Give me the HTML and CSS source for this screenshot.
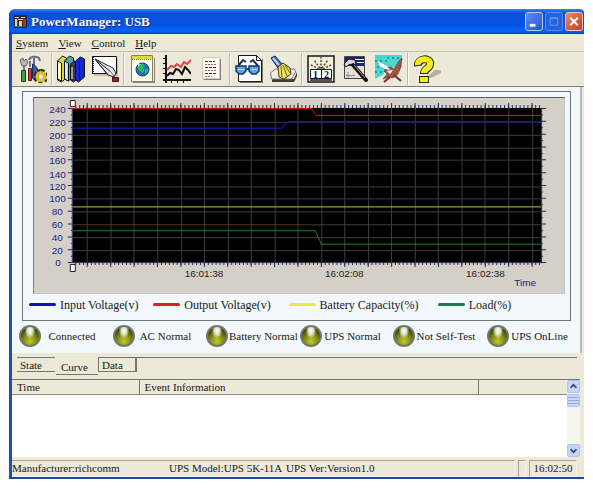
FILE: index.html
```html
<!DOCTYPE html>
<html lang="en">
<head>
<meta charset="utf-8">
<title>PowerManager: USB</title>
<link rel="stylesheet" href="styles.css">
</head>
<body>
<main class="window">
  <header class="titlebar">
    <svg class="app-icon" viewBox="0 0 13 13" aria-hidden="true">
      <path fill="#302828" d="M0 0h13v13H0z"/><path fill="#d8d0c0" d="M1 2h4v1H1zM7 2h4v1H7zM1 4h2v7H1zM4 4h5v1H4zM5 6h3v5H5z"/><path fill="#a83030" d="M9 4h3v8H9zM3 5h1v5H3z"/><path fill="#408060" d="M0 11h8v1H0z"/>
    </svg>
    <h1 class="title">PowerManager: USB</h1>
    <button class="winbtn" aria-label="Minimize"><svg viewBox="0 0 17 17"><path fill="#fff" d="M4 11h6v3H4z"/></svg></button>
    <button class="winbtn winbtn-max" aria-label="Maximize"><svg viewBox="0 0 17 17"><path fill="none" stroke="#6a9cf4" d="M4.500 4.500h8v8h-8zM4 5.500h9"/></svg></button>
    <button class="winbtn winbtn-close" aria-label="Close"><svg viewBox="0 0 17 17"><path fill="none" stroke="#fff" stroke-width="2" d="M4.500 4.500l8 8M12.500 4.500l-8 8"/></svg></button>
  </header>

  <nav class="menu">
    <button><u>S</u>ystem</button>
    <button><u>V</u>iew</button>
    <button><u>C</u>ontrol</button>
    <button><u>H</u>elp</button>
  </nav>

  <div class="toolbar" role="toolbar">
    <button aria-label="Settings"><svg viewBox="0 0 28 28">
      <path fill="#b8b8b0" stroke="#505050" stroke-width=".8" d="M1 5l3-2 1 3 2-2 2 3-2 4H3z"/>
      <path stroke="#777" stroke-width="2" d="M5 10v6M11 6v6"/>
      <path fill="#38a048" stroke="#184020" d="M2.500 15.500h4v11h-4z"/>
      <path fill="#d03838" stroke="#601818" d="M9.500 13.500h3v12h-3z"/>
      <path fill="none" stroke="#607080" stroke-width="2" d="M10 5c1-4 7-4 10-2l1 3M15 3v9"/>
      <path fill="#3858c0" stroke="#182858" d="M13.500 9l4 3 2 6-3 8-3-3z"/>
      <path fill="none" stroke="#303000" stroke-width="5" stroke-dasharray="3 1.700" d="M22 16.500a5 5 0 1 1-.1 0"/>
      <circle cx="22" cy="21.500" r="4" fill="none" stroke="#e0c020" stroke-width="3"/>
    </svg></button>
    <i class="sep"></i>
    <button aria-label="Log"><svg viewBox="0 0 28 28">
      <g stroke="#101010" stroke-linejoin="round"><path fill="#d8d840" d="M.500 6l5-5 4 2v20l-5 4-4-2z"/><path fill="#fff8b0" d="M.500 6l4 2v18l-4-2z"/><path fill="#50a8a8" d="M7.500 6l5-5 4 2v18l-5 5-4-2z"/><path fill="#b0e0d8" d="M7.500 6l4 2v18l-4-2z"/><path fill="#383850" d="M13.500 9l4-3 3 2v16l-4 3-3-2z"/><path fill="#1828d0" d="M18.500 6l5-4 4 2v18l-6 5-3-2z"/></g>
      <path fill="none" stroke="#fff" d="M2 9v13M9 9v13M15 12v12"/><path stroke="#0010a0" d="M22.500 7v18M23 2l-4 4"/>
    </svg></button>
    <button aria-label="Event note"><svg viewBox="0 0 28 28">
      <path fill="#c8c0b0" d="M3 3h24v18H3z"/><path fill="#fff" stroke="#111" d="M1.500 1.500h24v17h-24z"/><path stroke="#111" stroke-width="2" stroke-dasharray="1 1" d="M2 2v17"/>
      <path fill="#e8e8e8" stroke="#222" stroke-linejoin="round" d="M4 4l18 9 3 5-2 4-6-2zM4 4l13 16M4 4l16 13"/><path stroke="#777" d="M19 16l4 5"/><path fill="#982020" stroke="#401010" d="M21.500 22.500h6v4h-6z"/>
    </svg></button>
    <i class="sep"></i>
    <button aria-label="Web"><svg viewBox="0 0 28 28">
      <path fill="#908878" d="M4 26h21V3h1v25H4z"/><path fill="#fffdf0" stroke="#888060" d="M2.500.500h21v26h-21z"/><path fill="#d8dc38" d="M3 1h20v3H3z"/><path stroke="#807820" stroke-dasharray="1 1" d="M3 4.500h20"/>
      <circle cx="13.500" cy="14.500" r="6.500" fill="#2070c8" stroke="#104060"/><path fill="#38b850" d="M8 12l4-3 4 1-2 3 2 2-3 3-3-3zM16 15l3-2v4l-3 3z"/><path fill="#90e0e8" d="M9 9h3l-3 3z"/>
    </svg></button>
    <button aria-label="Curve"><svg viewBox="0 0 28 28">
      <path fill="none" stroke="#101010" stroke-width="2" d="M3 0v28M0 25h28"/><path stroke="#101010" d="M0 3.500h3M0 8.500h3M0 13.500h3M0 18.500h3M8.500 25v3M14.500 25v3M20.500 25v3"/>
      <path fill="none" stroke="#d84848" stroke-width="2" d="M4 15l4-4 3 1 3-3 4 3 3-5 3 2 4-4"/><path fill="none" stroke="#181010" stroke-width="2" d="M4 21l3-3 3 1 3-5 3 1 3 4 3-7 3 3 3 4"/>
    </svg></button>
    <button aria-label="Report"><svg viewBox="0 0 28 28">
      <path fill="#888070" d="M7 24h16V4h1v21H7z"/><path fill="#fffdf5" stroke="#d0c8b8" d="M5.500 2.500h17v21h-17z"/><path fill="none" stroke="#383030" stroke-dasharray="3 1" d="M8 6.500h10M8 12.500h12M8 18.500h11"/><path fill="none" stroke="#c06050" stroke-dasharray="2 1" d="M8 9.500h12M8 15.500h12M8 21.500h7"/>
    </svg></button>
    <i class="sep"></i>
    <button aria-label="View"><svg viewBox="0 0 28 28">
      <path fill="#807870" d="M5 27h22V4h1v24H5z"/><path fill="#fff" stroke="#181818" d="M3.500.500h18l5 5v21h-23z"/><path fill="none" stroke="#181818" d="M21.500.500v5h5"/>
      <path fill="none" stroke="#203048" stroke-width="2" d="M3 11l5-6 3 2M23 11l-5-6-3 2M12 14h3"/><path fill="#58a8e8" stroke="#103868" stroke-width="1.500" d="M1 11h10v5l-3 3H4l-3-3zM14 11h10v5l-3 3h-4l-3-3z"/><path stroke="#b8e0ff" d="M3 14.500h6M16 14.500h6"/>
    </svg></button>
    <button aria-label="Clean"><svg viewBox="0 0 28 28">
      <path fill="#403c38" d="M3 24h22l3-7v4l-3 6H3z"/><path fill="#f0eee0" stroke="#777" d="M1.500 18l5-4h19l1 3-4 7h-20z"/><path fill="#3870b8" stroke="#102848" d="M2 3l4-2 7 8-4 4z"/><path stroke="#b0d8f8" stroke-width="2" d="M4 3l6 7"/>
      <path fill="#f0e060" stroke="#403810" stroke-linejoin="round" d="M9 12l5-4 7 5 1 6-7 5-5-2z"/><path fill="none" stroke="#706018" d="M12 11l1 11M14 10l4 11M16 10l5 8"/>
    </svg></button>
    <i class="sep"></i>
    <button aria-label="Schedule"><svg viewBox="0 0 28 28">
      <path fill="#f2efdf" stroke="#181818" stroke-width="1.500" d="M1 1h26v26H1z"/><path fill="none" stroke="#604018" stroke-width="1.500" stroke-dasharray="2 1.500" d="M14 14V2M13 13L7 5M15 13l6-8M12 14L4 10M16 14l8-4"/>
      <path fill="#fff" stroke="#102030" d="M3.500 14.500h21v9h-21z"/><path stroke="#102030" d="M14.500 15v9"/><path fill="#555" d="M3 24h22v2H3z"/>
      <text class="digits" x="6" y="23">1</text><text class="digits" x="17" y="23">2</text>
    </svg></button>
    <button aria-label="Tools"><svg viewBox="0 0 28 28">
      <path fill="#e4e0d4" stroke="#444" d="M3.500 1.500h20v22h-20z"/><path fill="#182878" d="M4 2h19v9H4z"/><path fill="#fff" d="M14 4h9v1h-9zM16 7h7v1h-7z"/><path stroke="#888" d="M7 17v6M5 20.500h9"/>
      <path fill="#d8d8d8" stroke="#181818" d="M3 9l5-5 6 1 1 4-4 2-2-2-4 3z"/><path stroke="#181018" stroke-width="4" stroke-linecap="round" d="M12 10l13 15"/><path stroke="#b09890" d="M13 10l11 13"/>
    </svg></button>
    <button aria-label="Bird"><svg viewBox="0 0 28 28">
      <path fill="#48d8d0" d="M0 0h27v6l-7 6-8 2-4 6-8 4z"/><path fill="#e8e8dc" d="M27 6v21H0v-3l8-4 4-6 8-2z"/><path stroke="#2898a8" stroke-width="2" stroke-dasharray="2 3" d="M0 6h12M2 12h8M0 17h7M12 3h12"/>
      <path fill="#9a5848" stroke="#482020" stroke-width=".5" d="M11 13l5-1 3 2 5-8 3-3-1 9-3 7-5 4-4-1-6 2 4-5-3-3z"/><path fill="#fff" d="M3 6l9 5 3 4-5-1-5-3zM12 16l6-1-3 4z"/><path stroke="#802828" stroke-width="2" d="M15 22l-6 5M19 20l7 6"/>
    </svg></button>
    <i class="sep"></i>
    <button aria-label="Help"><svg viewBox="0 0 28 28">
      <path fill="#b8b098" d="M14 22l8-7h6v3l-10 5z"/><path fill="none" stroke="#282800" stroke-width="8" d="M5 11C4 3 18 2 17 9c0 5-6 4-6 10"/><path fill="#282800" d="M6 21h10v7H6z"/>
      <path fill="none" stroke="#f4ec20" stroke-width="6" d="M5 10C4 3 18 2 17 9c0 5-6 4-6 9"/><path fill="#f4ec20" d="M7 22h8v5H7z"/>
    </svg></button>
  </div>

  <section class="panel">
    <div class="frame">
      <svg class="chart" viewBox="33 98 533 196" role="img" aria-label="Voltage, capacity and load over time">
        <path d="M72 108h471v155H72z"/>
        <g class="grid">
          <path d="M86.500 108v155M110.500 108v155M133.500 108v155M157.500 108v155M181.500 108v155M204.500 108v155M228.500 108v155M251.500 108v155M275.500 108v155M298.500 108v155M322.500 108v155M345.500 108v155M369.500 108v155M392.500 108v155M416.500 108v155M439.500 108v155M463.500 108v155M486.500 108v155M510.500 108v155M534.500 108v155"/>
          <path d="M72 122.500h471M72 148.500h471M72 160.500h471M72 174.500h471M72 187.500h471M72 199.500h471M72 212.500h471M72 251.500h471"/>
          <path class="grid-warm" d="M72 135.500h471M72 225.500h471M72 238.500h471"/>
        </g>
        <g class="ticks">
          <path stroke-width="3" stroke-dasharray="1 2.920" d="M74.500 106.500H543M74.500 264.500H543"/>
          <path stroke-width="5" stroke-dasharray="1 22.550" d="M86 105.500H543M86 265.500H543"/>
          <path stroke-width="5" stroke-dasharray="1 11.920" d="M69.500 108V265M545.500 108V265"/>
          <path stroke-width="2" stroke-dasharray="1 11.920" d="M71 114.500V263M544 114.500V263"/>
          <path d="M72 263.500h472M71.500 108v156M543.500 108v156"/>
        </g>
        <g class="series">
          <path stroke="#141496" stroke-width="1.500" d="M72 128.500h210l6-6.500h255"/>
          <path stroke="#d01818" d="M72 108.500h240l5 7h226"/>
          <path stroke="#c8c040" d="M72 207.500h471"/>
          <path stroke="#208038" d="M72 231.500h244l6 13.500h221"/>
        </g>
        <path fill="#fff" stroke="#222" d="M69.500 100.500h5v6h-5zM69.500 265.500h5v7h-5z"/>
        <g class="axis-y">
          <text x="65" y="113">240</text><text x="65" y="126">220</text><text x="65" y="139">200</text><text x="65" y="152">180</text><text x="65" y="164">160</text><text x="65" y="178">140</text><text x="65" y="191">120</text><text x="65" y="203">100</text><text x="62" y="216">80</text><text x="62" y="229">60</text><text x="62" y="242">40</text><text x="62" y="255">20</text><text x="60" y="267">0</text>
        </g>
        <g class="axis-x"><text x="204" y="278">16:01:38</text><text x="345" y="278">16:02:08</text><text x="487" y="278">16:02:38</text><text class="axis-name" x="527" y="287">Time</text></g>
      </svg>
      <ul class="legend">
        <li class="input">Input Voltage(v)</li>
        <li class="output">Output Voltage(v)</li>
        <li class="battery">Battery Capacity(%)</li>
        <li class="load">Load(%)</li>
      </ul>
    </div>
    <ul class="leds">
      <li><span>Connected</span></li>
      <li><span>AC Normal</span></li>
      <li><span>Battery Normal</span></li>
      <li><span>UPS Normal</span></li>
      <li><span>Not Self-Test</span></li>
      <li><span>UPS OnLine</span></li>
    </ul>
  </section>

  <div class="tabs" role="tablist">
    <button role="tab">State</button>
    <button role="tab" aria-selected="true">Curve</button>
    <button role="tab">Data</button>
  </div>

  <section class="events">
    <table>
      <thead><tr><th class="col-time">Time</th><th>Event Information</th><th class="col-rest"></th></tr></thead>
    </table>
    <div class="scroll">
      <button aria-label="Scroll up"><svg viewBox="0 0 13 13"><path fill="none" stroke="#304878" stroke-width="2" d="M3 8l3.500-3.500L10 8"/></svg></button>
      <div class="thumb"></div>
      <button class="down" aria-label="Scroll down"><svg viewBox="0 0 13 13"><path fill="none" stroke="#304878" stroke-width="2" d="M3 5l3.500 3.500L10 5"/></svg></button>
    </div>
  </section>

  <footer class="status">
    <div class="info"><span class="maker">Manufacturer:richcomm</span><span class="model">UPS Model:UPS 5K-11A</span><span>UPS Ver:Version1.0</span></div>
    <div class="spacer"></div>
    <time class="clock">16:02:50</time>
  </footer>
</main>
</body>
</html>
```
FILE: styles.css
```css
* { box-sizing: border-box; }

body {
  margin: 0;
  padding: 9px;
  background: #fff;
  color: #181818;
  font: 11px/14px "Liberation Serif", serif;
}

button {
  margin: 0;
  padding: 0;
  border: 0;
  background: none;
  color: inherit;
  font: inherit;
}

ul { margin: 0; padding: 0; list-style: none; }
svg { display: block; }

.window {
  background: #ece9d8;
  border-left: 3px solid #1c50b4;
  border-bottom: 2px solid #1c48a0;
  border-radius: 6px 4px 0 0;
}

.titlebar {
  display: flex;
  align-items: center;
  gap: 2px;
  height: 25px;
  margin-left: -3px;
  padding: 0 1px 0 5px;
  border-radius: 6px 4px 0 0;
  background: linear-gradient(#3c84e4 0, #0a50dc 4px, #0452e0 16px, #0664fc 22px, #0040c0 25px);
}
.app-icon { width: 13px; height: 13px; }
.title {
  flex: 1;
  margin: 0 0 0 2px;
  color: #fff;
  font-size: 13px;
  line-height: 16px;
  text-shadow: 1px 1px #103080;
}
.winbtn {
  width: 18px;
  height: 19px;
  border: 1px solid #b4ccfa;
  border-radius: 3px;
  background: linear-gradient(135deg, #5c8cf0, #2456d8);
}
.winbtn svg { width: 100%; height: 100%; }
.winbtn-max { border-color: #5c90f0; background: #2460e0; }
.winbtn-close { border-color: #f0c8c0; background: linear-gradient(135deg, #ec8868, #c83c1c); }

.menu {
  display: flex;
  gap: 10px;
  height: 17px;
  padding: 1px 4px 0;
}

.toolbar {
  display: flex;
  align-items: center;
  height: 36px;
  padding-left: 4px;
  border-top: 1px solid #c4c0b0;
  border-bottom: 1px solid #807c70;
}
.toolbar button { flex: 0 0 34px; padding: 0 3px; }
.toolbar svg { width: 28px; height: 28px; }
.digits { fill: #101840; font: bold 10px "Liberation Serif", serif; }
.sep {
  flex: 0 0 4px;
  height: 32px;
  background: linear-gradient(90deg, #ece9d8 1px, #bcb8a8 1px 2px, #fff 2px 3px, #ece9d8 3px);
}

.panel {
  margin-right: 2px;
  padding: 4px 9px 6px 10px;
  border-right: 2px solid #b8b8b4;
  background: #f2f8fc;
}
.frame {
  padding: 5px 5px 0 10px;
  border: 1px solid #70767a;
}
.chart {
  width: 100%;
  height: auto;
  border-top: 1px solid #585c60;
  border-left: 1px solid #787c80;
  border-right: 1px solid #c4c4c4;
  border-bottom: 1px solid #c4c4c4;
  background: #d4d0c8;
}
.grid { fill: none; stroke: #3c3c3c; }
.grid-warm { stroke: #443c34; }
.ticks { fill: none; stroke: #28285c; }
.series { fill: none; }
.axis-y, .axis-x { font: 10px "Liberation Sans", sans-serif; }
.axis-y { fill: #1c1c88; text-anchor: end; }
.axis-x { fill: #202020; text-anchor: middle; }
.axis-name { fill: #1c1c88; }

.legend {
  display: grid;
  grid-template-columns: 125fr 136fr 150fr 133fr;
  margin: 0 -5px 0 -4px;
  padding: 4px 0 8px;
  font-size: 12px;
}
.legend li { display: flex; align-items: center; gap: 4px; white-space: nowrap; }
.legend li::before {
  content: "";
  width: 27px;
  height: 3px;
  border-radius: 2px;
  background: currentColor;
}
.input::before { color: #1414b4; }
.output::before { color: #d42424; }
.battery::before { color: #ece83c; }
.load::before { color: #207850; }

.leds {
  display: grid;
  grid-template-columns: repeat(6, 1fr);
  margin: 4px -9px 0 -3px;
}
.leds li { display: flex; align-items: center; gap: 1px; white-space: nowrap; }
.leds li::before {
  content: "";
  flex: 0 0 18px;
  height: 18px;
  border: 2px solid #74786c;
  border-radius: 50%;
  background:
    radial-gradient(ellipse at 50% 20%, #fff 0, #dce0c8 20%, transparent 42%),
    radial-gradient(circle at 50% 80%, #c0cc20 0, #808c10 40%, #3c4408 75%);
}
.leds span { min-width: 60px; text-align: center; }

.tabs {
  display: flex;
  align-items: flex-start;
  height: 26px;
  padding: 4px 7px 0 5px;
}
.tabs button {
  height: 15px;
  padding: 0 7px 0 3px;
  border: solid #77746a;
  border-width: 1px 0;
  text-align: left;
  flex: 0 0 38px;
}
.tabs button[aria-selected] {
  flex-basis: 42px;
  height: 18px;
  margin-left: 1px;
  padding: 3px 0 0 5px;
  border-top: 0;
}
.tabs button:last-of-type { flex-basis: 39px; border-width: 1px 2px 1px 1px; }
.tabs::after { content: ""; flex: 1; border-top: 1px solid #77746a; }

.events {
  display: flex;
  height: 78px;
  margin-right: 4px;
  border-top: 1px solid #77746a;
  background: #fff;
}
table { flex: 1; height: 15px; border-collapse: collapse; table-layout: fixed; }
th {
  height: 15px;
  padding: 0 5px;
  border-bottom: 1px solid #8c897c;
  background: #ece9d8;
  font-weight: normal;
  text-align: left;
}
th + th { border-left: 1px solid #77746a; }
.col-time { width: 127px; }
.col-rest { width: 89px; }
.scroll {
  display: flex;
  flex-direction: column;
  gap: 1px;
  width: 13px;
  background: #f6f5f0;
}
.scroll button, .thumb {
  flex: 0 0 13px;
  border: 1px solid #b0c4f0;
  border-radius: 2px;
  background: #c4d4fa;
}
.scroll svg { width: 100%; height: 100%; }
.scroll .down { margin-top: auto; }
.thumb { background: repeating-linear-gradient(#c8d8fc 0 2px, #94acdc 2px 3px); }

.status {
  display: flex;
  gap: 3px;
  margin-top: 3px;
  padding-right: 7px;
}
.status > * { height: 17px; border: 1px solid #f4f2e8; border-top-color: #a8a498; }
.info { display: flex; flex: 1; border-left: 0; white-space: nowrap; }
.maker { flex: 0 0 157px; }
.model { flex: 0 0 117px; }
.spacer { width: 8px; border-left-color: #a8a498; }
.clock { width: 48px; border-left-color: #a8a498; text-align: center; }
```
